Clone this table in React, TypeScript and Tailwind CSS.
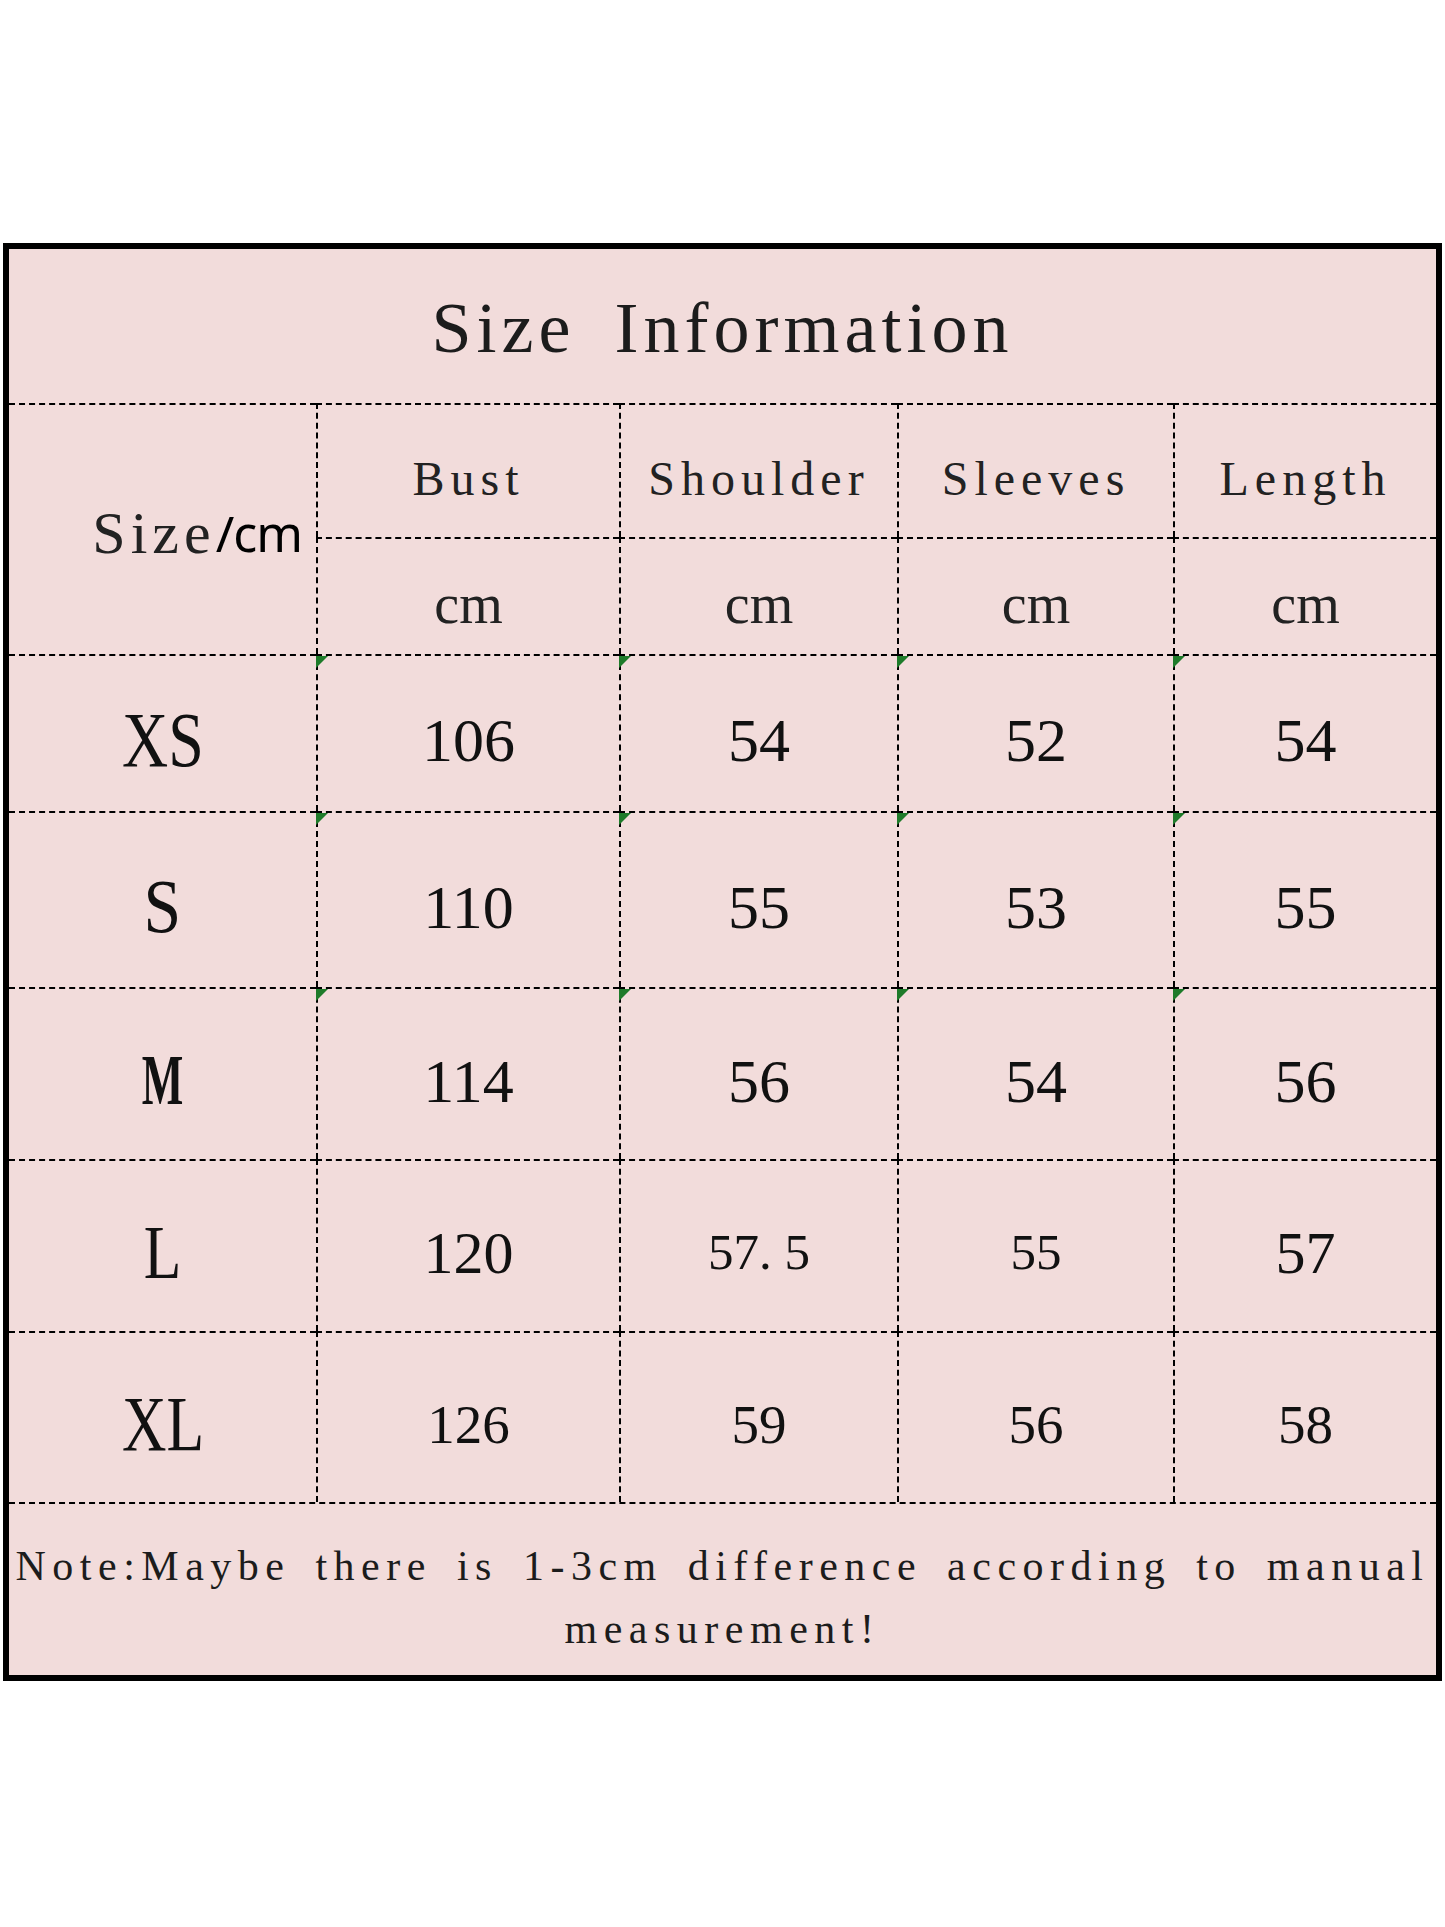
import React from "react";

const serif = "font-['Liberation_Serif','Times_New_Roman',serif]";
const line = "border-dashed border-black";

type Row = {
  size: string;
  sizeCls: string;
  vals: { v: string; cls: string }[];
  marker: boolean;
};

const rows: Row[] = [
  {
    size: "XS",
    sizeCls: "text-[78px] scale-x-[0.82]",
    vals: [
      { v: "106", cls: "text-[62px]" },
      { v: "54", cls: "text-[62px]" },
      { v: "52", cls: "text-[62px]" },
      { v: "54", cls: "text-[62px]" },
    ],
    marker: true,
  },
  {
    size: "S",
    sizeCls: "text-[77px] scale-x-[0.88]",
    vals: [
      { v: "110", cls: "text-[62px]" },
      { v: "55", cls: "text-[62px]" },
      { v: "53", cls: "text-[62px]" },
      { v: "55", cls: "text-[62px]" },
    ],
    marker: true,
  },
  {
    size: "M",
    sizeCls: "text-[71px] font-bold scale-x-[0.62]",
    vals: [
      { v: "114", cls: "text-[62px]" },
      { v: "56", cls: "text-[62px]" },
      { v: "54", cls: "text-[62px]" },
      { v: "56", cls: "text-[62px]" },
    ],
    marker: true,
  },
  {
    size: "L",
    sizeCls: "text-[77px] scale-x-[0.8]",
    vals: [
      { v: "120", cls: "text-[60px]" },
      { v: "57. 5", cls: "text-[51px]" },
      { v: "55", cls: "text-[51px]" },
      { v: "57", cls: "text-[60px]" },
    ],
    marker: false,
  },
  {
    size: "XL",
    sizeCls: "text-[78px] scale-x-[0.79]",
    vals: [
      { v: "126", cls: "text-[55px]" },
      { v: "59", cls: "text-[55px]" },
      { v: "56", cls: "text-[55px]" },
      { v: "58", cls: "text-[55px]" },
    ],
    marker: false,
  },
];

const headers = ["Bust", "Shoulder", "Sleeves", "Length"];

function Marker() {
  return (
    <svg className="absolute -left-[2px] top-0" width="12" height="12" viewBox="0 0 12 12">
      <polygon points="0,0 12,0 0,12" fill="#1e7b2a" />
    </svg>
  );
}

export default function App() {
  return (
    <div className={`w-[1445px] h-[1927px] bg-white pt-[243px] pl-[3px] text-[#111] ${serif}`}>
      <div className="w-[1439px] border-[6px] border-black bg-[#f2dcdb]">
        <div className="grid grid-cols-[307px_303px_278px_276px_1fr] grid-rows-[154px_134px_117px_157px_176px_172px_172px_171px_173px]">
          {/* title */}
          <div className="col-span-5 flex items-center justify-center pt-1">
            <span className="text-[72px] leading-none tracking-[5px] [word-spacing:16px] text-[#1c1c1c]">
              Size Information
            </span>
          </div>

          {/* header */}
          <div className={`row-span-2 flex items-center justify-end pr-[14px] pt-[7px] border-t-2 ${line}`}>
            <span className="text-[60px] leading-none tracking-[5px] text-[#222]">Size</span>
            <span className="font-['Noto_Sans',sans-serif] text-[50px] leading-none tracking-[-1px] text-black">
              /cm
            </span>
          </div>
          {headers.map((h) => (
            <div key={h} className={`flex items-center justify-center pt-4 border-t-2 border-l-2 ${line}`}>
              <span className="text-[48px] leading-none tracking-[6px] text-[#222]">{h}</span>
            </div>
          ))}
          {headers.map((h) => (
            <div key={h + "-cm"} className={`flex items-center justify-center pt-[15px] border-t-2 border-l-2 ${line}`}>
              <span className="text-[56px] leading-none text-[#222]">cm</span>
            </div>
          ))}

          {/* data rows */}
          {rows.map((r) => (
            <React.Fragment key={r.size}>
              <div className={`flex items-center justify-center pt-[13px] border-t-2 ${line}`}>
                <span className={`inline-block leading-none ${r.sizeCls}`}>{r.size}</span>
              </div>
              {r.vals.map((c, i) => (
                <div
                  key={i}
                  className={`relative flex items-center justify-center pt-[13px] border-t-2 border-l-2 ${line}`}
                >
                  {r.marker && <Marker />}
                  <span className={`leading-none ${c.cls}`}>{c.v}</span>
                </div>
              ))}
            </React.Fragment>
          ))}

          {/* note */}
          <div className={`col-span-5 flex flex-col items-center justify-center pt-4 border-t-2 ${line}`}>
            <p className="text-[42px] leading-[63px] tracking-[6.5px] [word-spacing:8px] text-center whitespace-nowrap text-[#1c1c1c]">
              Note:Maybe there is 1-3cm difference according to manual
              <br />
              measurement!
            </p>
          </div>
        </div>
      </div>
    </div>
  );
}
